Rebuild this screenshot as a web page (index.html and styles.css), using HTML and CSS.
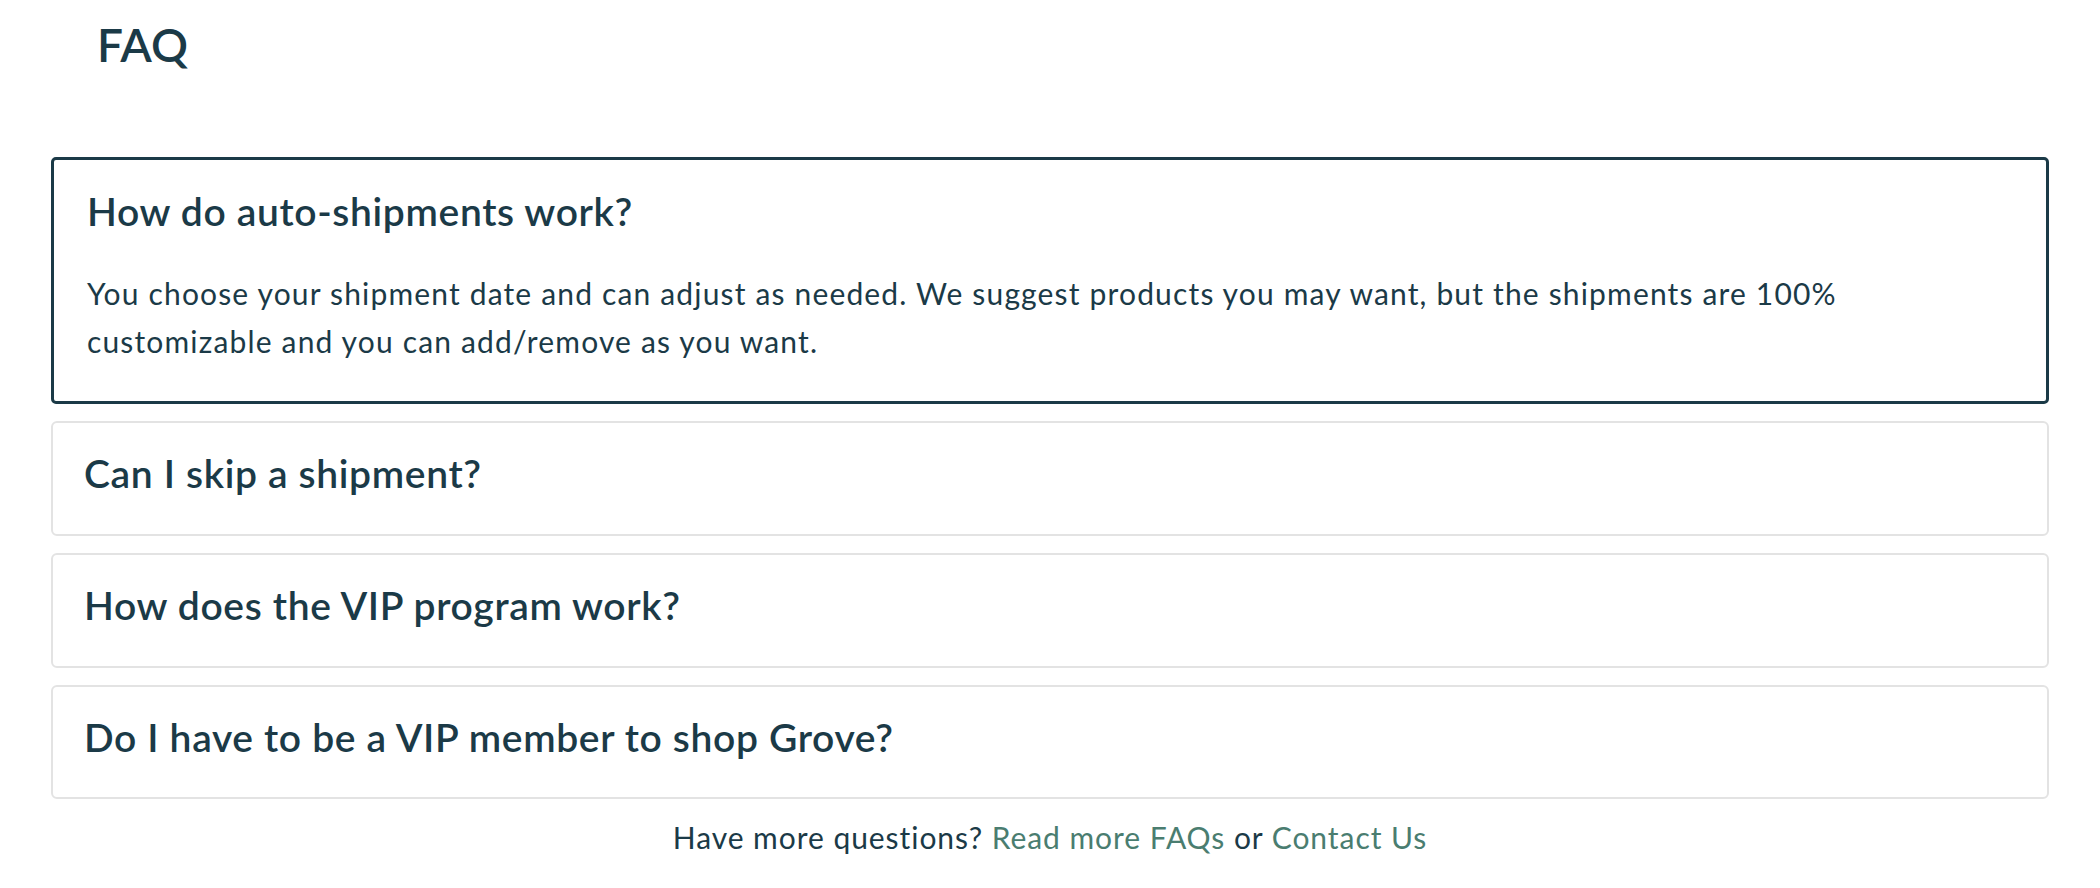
FILE: index.html
```html
<!DOCTYPE html>
<html lang="en">
<head>
<meta charset="utf-8">
<title>FAQ</title>
<link rel="stylesheet" href="styles.css">
</head>
<body>
<main class="page">
  <h1 class="title">FAQ</h1>
  <div class="faq-list">
    <div class="faq-item open">
      <h3 class="question">How do auto-shipments work?</h3>
      <p class="answer">You choose your shipment date and can adjust as needed. We suggest products you may want, but the shipments are 100% customizable and you can add/remove as you want.</p>
    </div>
    <div class="faq-item">
      <h3 class="question">Can I skip a shipment?</h3>
    </div>
    <div class="faq-item">
      <h3 class="question">How does the VIP program work?</h3>
    </div>
    <div class="faq-item">
      <h3 class="question">Do I have to be a VIP member to shop Grove?</h3>
    </div>
  </div>
  <p class="more">Have more questions? <a href="#" class="link">Read more FAQs</a> or <a href="#" class="link">Contact Us</a></p>
</main>
</body>
</html>
```

FILE: styles.css
```css
html, body {
  margin: 0;
  padding: 0;
  background: #ffffff;
}

body {
  font-family: "Lato", "Open Sans", sans-serif;
  color: #1b3a47;
}

.page {
  padding: 17px 51px 0;
}

.title {
  margin: 0 0 85px 46px;
  font-size: 46px;
  line-height: 1.2;
  font-weight: 600;
  letter-spacing: 0;
}

.faq-list {
  display: flex;
  flex-direction: column;
  gap: 17px;
}

.faq-item {
  border: 2px solid #e3e3e3;
  border-radius: 6px;
  padding: 27px 33px 37px 31px;
}

.faq-item.open {
  border: 3px solid #1b3a47;
  border-radius: 5px;
  padding: 28px 33px 36px 33px;
}

.question {
  margin: 0;
  font-size: 39px;
  line-height: 1.2;
  font-weight: 600;
  letter-spacing: 0.65px;
}

.answer {
  margin: 34px 0 0;
  padding-right: 60px;
  font-size: 30px;
  line-height: 48px;
  font-weight: 400;
  letter-spacing: 1.16px;
}

.more {
  margin: 14px 0 0;
  text-align: center;
  font-size: 30px;
  line-height: 48px;
  letter-spacing: 0.95px;
}

.link {
  color: #4a7d70;
  text-decoration: none;
}
```
